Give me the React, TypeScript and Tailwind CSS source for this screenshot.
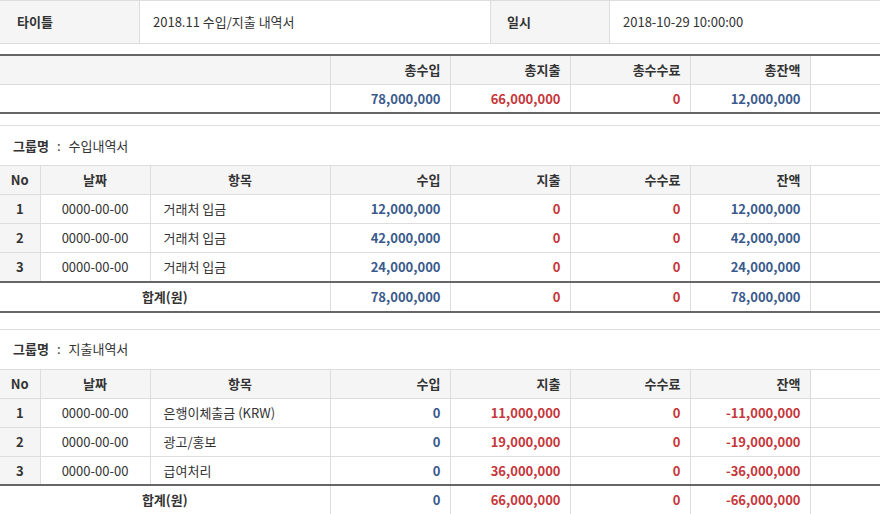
import React from "react";

const B = "text-[#3a5a8c]";
const R = "text-[#c6363a]";
const cols = [40, 110, 180, 120, 120, 120, 120, 70];

type Row = [string, string, string, string, string, string, string];

function Group({ name, rows, total }: { name: string; rows: Row[]; total: string[] }) {
  const color = (v: string, i: number) => (i === 0 ? B : i === 1 ? R : i === 2 ? R : v.startsWith("-") ? R : B);
  return (
    <div className="mt-[11px] border-t border-[#ddd]">
      <div className="h-[39px] flex items-center pl-[13px] text-[13px] text-[#333]">
        <span className="font-bold">그룹명</span>
        <span className="mx-[8px]">:</span>
        <span>{name}</span>
      </div>
      <table className="w-full border-collapse table-fixed text-[13px] text-[#333]">
        <colgroup>{cols.map((w, i) => <col key={i} style={{ width: w }} />)}</colgroup>
        <tbody>
          <tr className="h-[29px] bg-[#f5f5f5] font-bold border-t border-[#ddd]">
            <td className="text-center border-r border-[#ddd]">No</td>
            <td className="text-center border-r border-[#ddd]">날짜</td>
            <td className="text-center border-r border-[#ddd]">항목</td>
            <td className="text-right pr-[9px] border-r border-[#ddd]">수입</td>
            <td className="text-right pr-[9px] border-r border-[#ddd]">지출</td>
            <td className="text-right pr-[9px] border-r border-[#ddd]">수수료</td>
            <td className="text-right pr-[9px] border-r border-[#ddd]">잔액</td>
            <td className="bg-white"></td>
          </tr>
          {rows.map((r, k) => (
            <tr key={k} className="h-[29px] border-t border-[#ddd]">
              <td className="text-center font-bold bg-[#f5f5f5] border-r border-[#ddd]">{r[0]}</td>
              <td className="text-center border-r border-[#ddd]">{r[1]}</td>
              <td className="pl-[13px] border-r border-[#ddd]">{r[2]}</td>
              {r.slice(3).map((v, i) => (
                <td key={i} className={`text-right pr-[9px] font-bold border-r border-[#ddd] ${color(v, i)}`}>{v}</td>
              ))}
              <td></td>
            </tr>
          ))}
          <tr className="h-[30px] border-t-2 border-b-2 border-[#666]">
            <td colSpan={3} className="text-center font-bold border-r border-[#ddd]">합계(원)</td>
            {total.map((v, i) => (
              <td key={i} className={`text-right pr-[9px] font-bold border-r border-[#ddd] ${color(v, i)}`}>{v}</td>
            ))}
            <td></td>
          </tr>
        </tbody>
      </table>
    </div>
  );
}

export default function App() {
  return (
    <div className="w-[880px] h-[514px] overflow-hidden bg-white text-[13px] text-[#333]" style={{ fontFamily: '"Noto Sans CJK KR", "Noto Sans", sans-serif' }}>
      <div className="flex h-[44px] border-t border-b border-[#ddd]">
        <div className="w-[140px] bg-[#f5f5f5] border-r border-[#ddd] flex items-center pl-[17px] font-bold">타이틀</div>
        <div className="w-[350px] flex items-center pl-[13px]">2018.11 수입/지출 내역서</div>
        <div className="w-[120px] bg-[#f5f5f5] border-l border-r border-[#ddd] flex items-center pl-[16px] font-bold">일시</div>
        <div className="flex-1 flex items-center pl-[13px]">2018-10-29 10:00:00</div>
      </div>
      <table className="mt-[10px] w-full border-collapse table-fixed border-t-2 border-b-2 border-[#666]">
        <colgroup>{[330, 120, 120, 120, 120, 70].map((w, i) => <col key={i} style={{ width: w }} />)}</colgroup>
        <tbody>
          <tr className="h-[29px] bg-[#f5f5f5] font-bold">
            <td className="border-r border-[#ddd]"></td>
            {["총수입", "총지출", "총수수료", "총잔액"].map((t) => (
              <td key={t} className="text-right pr-[9px] border-r border-[#ddd]">{t}</td>
            ))}
            <td className="bg-white"></td>
          </tr>
          <tr className="h-[29px] border-t border-[#ddd] font-bold">
            <td className="border-r border-[#ddd]"></td>
            <td className={`text-right pr-[9px] border-r border-[#ddd] ${B}`}>78,000,000</td>
            <td className={`text-right pr-[9px] border-r border-[#ddd] ${R}`}>66,000,000</td>
            <td className={`text-right pr-[9px] border-r border-[#ddd] ${R}`}>0</td>
            <td className={`text-right pr-[9px] border-r border-[#ddd] ${B}`}>12,000,000</td>
            <td></td>
          </tr>
        </tbody>
      </table>
      <Group
        name="수입내역서"
        rows={[
          ["1", "0000-00-00", "거래처 입금", "12,000,000", "0", "0", "12,000,000"],
          ["2", "0000-00-00", "거래처 입금", "42,000,000", "0", "0", "42,000,000"],
          ["3", "0000-00-00", "거래처 입금", "24,000,000", "0", "0", "24,000,000"],
        ]}
        total={["78,000,000", "0", "0", "78,000,000"]}
      />
      <div className="h-[5px]" />
      <Group
        name="지출내역서"
        rows={[
          ["1", "0000-00-00", "은행이체출금 (KRW)", "0", "11,000,000", "0", "-11,000,000"],
          ["2", "0000-00-00", "광고/홍보", "0", "19,000,000", "0", "-19,000,000"],
          ["3", "0000-00-00", "급여처리", "0", "36,000,000", "0", "-36,000,000"],
        ]}
        total={["0", "66,000,000", "0", "-66,000,000"]}
      />
    </div>
  );
}
